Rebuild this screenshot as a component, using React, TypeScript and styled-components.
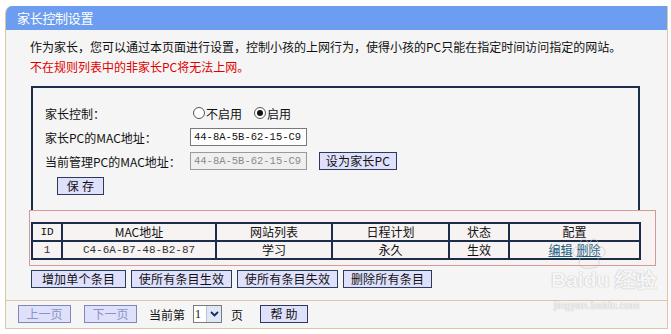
import styled, { createGlobalStyle } from "styled-components";

const GlobalStyle = createGlobalStyle`
  body {
    margin: 0;
    background: #ffffff;
    font-family: "Noto Sans CJK SC", "Noto Sans", sans-serif;
    font-size: 12px;
    color: #111111;
  }
`;

const Page = styled.div`
  width: 671px;
  height: 334px;
  padding: 6px 3px 0 5px;
  box-sizing: border-box;
`;

const Panel = styled.div`
  position: relative;
  width: 663px;
  height: 323px;
  box-sizing: border-box;
  background: #f5f5f5;
  border: 1px solid #dcc7a4;
  border-top: none;
  border-top-left-radius: 7px;
  overflow: hidden;
  display: flex;
  flex-direction: column;
`;

const TitleBar = styled.div`
  height: 24px;
  background: #6d9df0;
  color: #ffffff;
  font-size: 13px;
  line-height: 24px;
  padding-left: 11px;
  letter-spacing: -0.3px;
`;

const Body = styled.div`
  flex: 1;
  padding: 7px 0 0 24px;
`;

const Line = styled.div<{ $red?: boolean }>`
  height: 20px;
  line-height: 20px;
  font-size: 12px;
  color: ${(p) => (p.$red ? "#e00000" : "#111111")};
`;

const SettingsBox = styled.div`
  width: 609px;
  margin: 9px 0 0 1px;
  box-sizing: border-box;
  border: 2px solid #1c2d4c;
  border-bottom: none;
  padding: 13px 0 15px 12px;
`;

const FormRow = styled.div`
  height: 24px;
  display: flex;
  align-items: center;
`;

const Label = styled.div`
  width: 145px;
  flex-shrink: 0;
`;

const RadioGroup = styled.div`
  display: flex;
  align-items: center;
  gap: 12px;
  padding-left: 3px;
`;

const RadioOption = styled.label`
  display: flex;
  align-items: center;
  gap: 1px;
  font-size: 12px;
`;

const RadioDot = styled.span<{ $checked?: boolean }>`
  width: 12px;
  height: 12px;
  border-radius: 50%;
  border: 1px solid #555555;
  background: #ffffff;
  box-sizing: border-box;
  display: flex;
  align-items: center;
  justify-content: center;
  &::after {
    content: "";
    width: 6px;
    height: 6px;
    border-radius: 50%;
    background: ${(p) => (p.$checked ? "#111111" : "transparent")};
  }
`;

const MacInput = styled.div<{ $disabled?: boolean }>`
  width: 117px;
  height: 18px;
  box-sizing: border-box;
  border: 1px solid ${(p) => (p.$disabled ? "#9a9a9a" : "#7a7a7a")};
  background: ${(p) => (p.$disabled ? "#efefef" : "#ffffff")};
  color: ${(p) => (p.$disabled ? "#8a8a8a" : "#111111")};
  font-family: "Liberation Mono", "DejaVu Sans Mono", monospace;
  font-size: 10.5px;
  line-height: 16px;
  padding-left: 3px;
  white-space: nowrap;
  overflow: hidden;
`;

const Button = styled.button<{ $dim?: boolean; $w?: number }>`
  height: 18px;
  width: ${(p) => (p.$w ? `${p.$w}px` : "auto")};
  padding: 0;
  box-sizing: border-box;
  background: #dfe0fb;
  border: 1px solid ${(p) => (p.$dim ? "#7f88b5" : "#2c3a5c")};
  color: ${(p) => (p.$dim ? "#8a93c4" : "#111111")};
  font-family: "Noto Sans CJK SC", "Noto Sans", sans-serif;
  font-size: 12px;
  line-height: 16px;
  letter-spacing: ${(p) => (p.$dim ? "0" : "0.2px")};
  white-space: nowrap;
  cursor: pointer;
`;

const SetButton = styled(Button)`
  margin-left: 12px;
`;

const SaveRow = styled.div`
  margin-top: 4px;
  padding-left: 12px;
`;

const RuleBox = styled.div`
  width: 627px;
  margin-left: -1px;
  box-sizing: border-box;
  border: 1px solid #d49a9a;
  background: #f7f3f3;
  padding: 11px 0 5px 1px;
`;

const Table = styled.table`
  width: 608px;
  border-collapse: collapse;
  table-layout: fixed;
  font-size: 12px;
`;

const Th = styled.th<{ $mono?: boolean }>`
  height: 16px;
  border: 2px solid #1c2d4c;
  font-weight: normal;
  text-align: center;
  padding: 0;
  line-height: 16px;
  font-family: ${(p) =>
    p.$mono
      ? `"Liberation Mono", "DejaVu Sans Mono", monospace`
      : `"Noto Sans CJK SC", "Noto Sans", sans-serif`};
  font-size: ${(p) => (p.$mono ? "11px" : "12px")};
`;

const Td = styled.td<{ $mono?: boolean }>`
  height: 16px;
  border: 2px solid #1c2d4c;
  text-align: center;
  padding: 0;
  line-height: 16px;
  color: ${(p) => (p.$mono ? "#333333" : "#111111")};
  font-family: ${(p) =>
    p.$mono
      ? `"Liberation Mono", "DejaVu Sans Mono", monospace`
      : `"Noto Sans CJK SC", "Noto Sans", sans-serif`};
  font-size: ${(p) => (p.$mono ? "11px" : "12px")};
`;

const Link = styled.a`
  color: #17607e;
  text-decoration: underline;
  margin: 0 2px;
  cursor: pointer;
`;

const ActionRow = styled.div`
  display: flex;
  gap: 5px;
  margin-top: 4px;
  padding-left: 1px;
`;

const Footer = styled.div`
  height: 26px;
  border-top: 1px solid #dcc7a4;
  display: flex;
  align-items: center;
  padding-left: 12px;
  padding-bottom: 1px;
`;

const PageText = styled.span<{ $gap?: number }>`
  margin-left: ${(p) => p.$gap ?? 0}px;
  font-size: 12px;
`;

const Select = styled.div`
  margin-left: 8px;
  width: 29px;
  height: 18px;
  box-sizing: border-box;
  border: 1px solid #7a7a7a;
  background: #ffffff;
  display: flex;
  align-items: stretch;
`;

const SelectValue = styled.span`
  flex: 1;
  font-family: "Liberation Serif", serif;
  font-size: 12px;
  line-height: 16px;
  padding-left: 1px;
`;

const SelectArrow = styled.span`
  width: 14px;
  background: #dfe6f6;
  border-left: 1px solid #b8c4dc;
  display: flex;
  align-items: center;
  justify-content: center;
`;

const Watermark = styled.div`
  position: absolute;
  left: 545px;
  top: 262px;
  color: rgba(255, 255, 255, 0.9);
  text-shadow: 0 0 1px #bdbdbd, 0 0 1px #bdbdbd;
  pointer-events: none;
  font-family: "Liberation Sans", Arial, sans-serif;
`;

const WmMain = styled.div`
  font-size: 21px;
  font-weight: bold;
  line-height: 24px;
  white-space: nowrap;
`;

const WmSub = styled.div`
  font-size: 10px;
  line-height: 11px;
  margin-top: 8px;
  padding-left: 3px;
  letter-spacing: 0.3px;
`;

const Paw = styled.svg`
  position: absolute;
  left: 18px;
  top: -30px;
`;

export default function App() {
  return (
    <>
      <GlobalStyle />
      <Page>
        <Panel>
          <TitleBar>家长控制设置</TitleBar>
          <Body>
            <Line>
              作为家长，您可以通过本页面进行设置，控制小孩的上网行为，使得小孩的PC只能在指定时间访问指定的网站。
            </Line>
            <Line $red>不在规则列表中的非家长PC将无法上网。</Line>
            <SettingsBox>
              <FormRow>
                <Label>家长控制：</Label>
                <RadioGroup>
                  <RadioOption>
                    <RadioDot />
                    不启用
                  </RadioOption>
                  <RadioOption>
                    <RadioDot $checked />
                    启用
                  </RadioOption>
                </RadioGroup>
              </FormRow>
              <FormRow>
                <Label>家长PC的MAC地址：</Label>
                <MacInput>44-8A-5B-62-15-C9</MacInput>
              </FormRow>
              <FormRow>
                <Label>当前管理PC的MAC地址：</Label>
                <MacInput $disabled>44-8A-5B-62-15-C9</MacInput>
                <SetButton $w={78}>设为家长PC</SetButton>
              </FormRow>
              <SaveRow>
                <Button $w={47}>保 存</Button>
              </SaveRow>
            </SettingsBox>
            <RuleBox>
              <Table>
                <colgroup>
                  <col style={{ width: 30 }} />
                  <col style={{ width: 154 }} />
                  <col style={{ width: 116 }} />
                  <col style={{ width: 117 }} />
                  <col style={{ width: 60 }} />
                  <col style={{ width: 131 }} />
                </colgroup>
                <thead>
                  <tr>
                    <Th $mono>ID</Th>
                    <Th>MAC地址</Th>
                    <Th>网站列表</Th>
                    <Th>日程计划</Th>
                    <Th>状态</Th>
                    <Th>配置</Th>
                  </tr>
                </thead>
                <tbody>
                  <tr>
                    <Td $mono>1</Td>
                    <Td $mono>C4-6A-B7-48-B2-87</Td>
                    <Td>学习</Td>
                    <Td>永久</Td>
                    <Td>生效</Td>
                    <Td>
                      <Link>编辑</Link>
                      <Link>删除</Link>
                    </Td>
                  </tr>
                </tbody>
              </Table>
            </RuleBox>
            <ActionRow>
              <Button $w={95}>增加单个条目</Button>
              <Button $w={101}>使所有条目生效</Button>
              <Button $w={101}>使所有条目失效</Button>
              <Button $w={89}>删除所有条目</Button>
            </ActionRow>
          </Body>
          <Footer>
            <Button $dim $w={53}>
              上一页
            </Button>
            <Button $dim $w={53} style={{ marginLeft: 13 }}>
              下一页
            </Button>
            <PageText $gap={12}>当前第</PageText>
            <Select>
              <SelectValue>1</SelectValue>
              <SelectArrow>
                <svg width="9" height="6" viewBox="0 0 9 6">
                  <path d="M1 1 L4.5 4.5 L8 1" stroke="#1a2a5a" strokeWidth="1.8" fill="none" />
                </svg>
              </SelectArrow>
            </Select>
            <PageText $gap={9}>页</PageText>
            <Button $w={48} style={{ marginLeft: 17 }}>
              帮 助
            </Button>
          </Footer>
          <Watermark>
            <Paw width="40" height="32" viewBox="0 0 40 32">
              <g fill="none" stroke="rgba(190,190,190,0.55)" strokeWidth="1">
                <ellipse cx="8" cy="14" rx="4" ry="5" />
                <ellipse cx="15" cy="6" rx="4" ry="5" />
                <ellipse cx="25" cy="6" rx="4" ry="5" />
                <ellipse cx="32" cy="14" rx="4" ry="5" />
                <path d="M20 14 C12 14 8 24 11 28 C14 31 26 31 29 28 C32 24 28 14 20 14 Z" />
              </g>
            </Paw>
            <WmMain>Baidu 经验</WmMain>
            <WmSub>jingyan.baidu.com</WmSub>
          </Watermark>
        </Panel>
      </Page>
    </>
  );
}
